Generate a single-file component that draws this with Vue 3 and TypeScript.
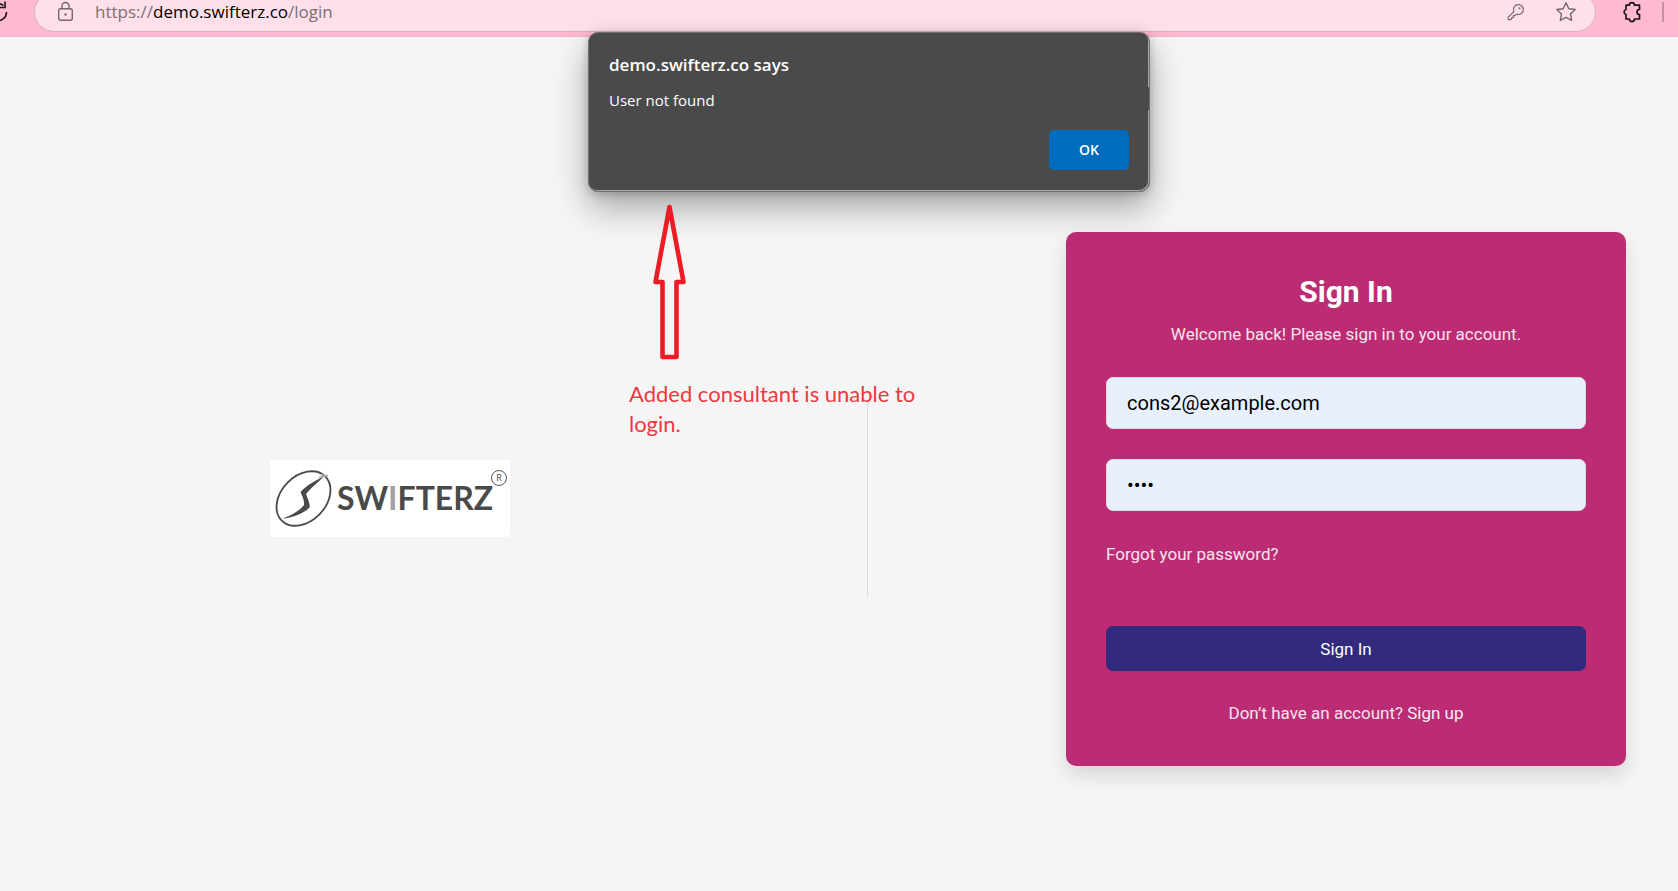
<script setup lang="ts">
import { ref } from 'vue'

const email = ref('cons2@example.com')
const password = ref('pass')
</script>

<template>
  <div class="window">
    <header class="toolbar">
      <button class="tool reload" type="button" aria-label="Refresh">
        <svg width="20" height="24" viewBox="0 0 20 24" fill="none" stroke="#1c1416" stroke-width="1.6">
          <path d="M18.500 12a8.500 8.500 0 1 1-3.200-6.500" />
          <path d="M17 1.500v6h-6" />
        </svg>
      </button>
      <div class="address">
        <svg width="18" height="22" viewBox="0 0 18 22" fill="none" stroke="#75676c" stroke-width="1.4">
          <rect x="1.7" y="7.7" width="13.6" height="11.6" rx="2" />
          <path d="M5 7.5V5a3.5 3.5 0 0 1 7 0v2.5" />
          <circle cx="8.5" cy="13.5" r="1.2" fill="#75676c" stroke="none" />
        </svg>
        <span class="url">https://<b>demo.swifterz.co</b>/login</span>
        <button class="tool" type="button" aria-label="Saved passwords">
          <svg width="18" height="18" viewBox="0 0 18 18" fill="none" stroke="#75676c" stroke-width="1.2" stroke-linejoin="round">
            <path d="M6.8 8.6A5 5 0 1 1 9.5 11.2L8 12.7H6.4v1.8H4.8v1.2L3.9 16.7H1.3v-2.6z" />
            <circle cx="12.6" cy="5.3" r="1" fill="#75676c" stroke="none" />
          </svg>
        </button>
        <button class="tool" type="button" aria-label="Add to favorites">
          <svg width="22" height="22" viewBox="0 0 22 22" fill="none" stroke="#75676c" stroke-width="1.4" stroke-linejoin="round">
            <path d="M11 1.8l2.8 5.9 6.4.8-4.7 4.5 1.2 6.4-5.7-3.1-5.7 3.1 1.2-6.4L1.8 8.5l6.4-.8z" />
          </svg>
        </button>
      </div>
      <button class="tool" type="button" aria-label="Extensions">
        <svg width="20" height="22" viewBox="0 0 20 22" fill="none" stroke="#1c1416" stroke-width="1.7" stroke-linejoin="round">
          <path d="M4 4.2h3.300a2.6 2.6 0 0 1 5.200 0H17.500v4.3a2.5 2.5 0 0 0 0 5V18H12.500a2.6 2.6 0 0 1-5.200 0H4v-4.500a2.6 2.6 0 0 1 0-5z" />
        </svg>
      </button>
      <span class="rule"></span>
    </header>

    <main class="page">
      <section class="brand">
        <svg class="logo" width="240" height="78" viewBox="0 0 240 78" role="img" aria-label="Swifterz">
          <rect width="240" height="77" rx="2" fill="#fff" />
          <ellipse cx="33.5" cy="38.5" rx="31" ry="22.5" transform="rotate(-46 33.5 38.5)" fill="none" stroke="#4a4a4a" stroke-width="1.8" />
          <path d="M53.5 17C45 20.5 37 25 30.5 32c2 4.500 4 8.500 3.500 13C30 51 21 55 12.500 58.800 22 57.500 33.500 54 39.500 47.500c1-4-2-9-3.500-13.500C41 28 47.500 22.500 53.500 17z" fill="#4a4a4a" />
          <path d="M51 14.5l5 1.5M49 17.5l9-2" stroke="#a5a5a5" stroke-width="1.6" />
          <text x="67" y="50" font-size="32" font-weight="700" fill="#4a4a4a">SW<tspan fill="#a0a0a0">I</tspan>FTERZ</text>
          <circle cx="229" cy="18" r="7.5" fill="none" stroke="#555" stroke-width="1" />
          <text x="229" y="21" font-size="9" text-anchor="middle" fill="#555">R</text>
        </svg>
      </section>
      <div class="divider"></div>
      <form class="card" @submit.prevent>
        <h1>Sign In</h1>
        <p class="welcome">Welcome back! Please sign in to your account.</p>
        <input v-model="email" type="email" aria-label="Email" />
        <input v-model="password" type="password" aria-label="Password" />
        <a class="forgot" href="#">Forgot your password?</a>
        <button class="submit" type="submit">Sign In</button>
        <p class="signup">Don’t have an account? <a href="#">Sign up</a></p>
      </form>
    </main>

    <div class="dialog" role="alertdialog" aria-labelledby="dialog-title" aria-describedby="dialog-text">
      <h2 id="dialog-title">demo.swifterz.co says</h2>
      <p id="dialog-text">User not found</p>
      <button type="button">OK</button>
    </div>

    <div class="note">
      <svg width="38" height="156" viewBox="0 0 38 156" fill="none" stroke="#ed1c24" stroke-width="4.6">
        <path d="M18.5 3 32.500 78H25.500V153H11.500V78H4.500z" stroke-linejoin="round" />
      </svg>
      <p>Added consultant is unable to login.</p>
    </div>
  </div>
</template>

<style>
body {
  margin: 0;
  background: #f5f5f5;
}
</style>

<style scoped>
.window {
  position: relative;
  box-sizing: border-box;
  min-height: 100vh;
  display: flex;
  flex-direction: column;
  overflow: hidden;
  background: #f5f5f5;
  font-family: Roboto, "Liberation Sans", sans-serif;
}

.window *,
.window *::before {
  box-sizing: border-box;
}

.toolbar {
  height: 37px;
  flex: none;
  display: flex;
  align-items: flex-end;
  gap: 26px;
  padding: 0 14px 4px 0;
  overflow: hidden;
  background: #ffb9d0;
  border-bottom: 1px solid #f3b4c8;
}

.tool {
  display: flex;
  padding: 0;
  border: 0;
  background: none;
}

.toolbar > .tool {
  margin-bottom: 9px;
}

.toolbar > .reload {
  margin: 0 0 8px -12px;
}

.address {
  flex: 1;
  height: 40px;
  display: flex;
  align-items: center;
  gap: 28px;
  padding: 0 18px 0 22px;
  border: 1px solid #d0b5bf;
  border-radius: 20px;
  background: #ffe0ea;
}

.address > .tool:first-of-type {
  margin-right: 2px;
}

.url {
  flex: 1;
  margin-left: -8px;
  color: #7c6f74;
  font: 17px/24px "Open Sans", "Noto Sans", sans-serif;
}

.url b {
  color: #000;
  font-weight: 400;
}

.rule {
  width: 2px;
  height: 20px;
  margin: 0 0 10px -6px;
  background: #c98fa3;
}

.page {
  flex: 1;
  display: flex;
  align-items: center;
  padding: 70px 52px 0 0;
}

.brand {
  flex: 1;
  display: flex;
  justify-content: center;
}

.logo {
  font-family: Lato, "Open Sans", sans-serif;
}

.divider {
  width: 1px;
  height: 196px;
  margin: 0 198px 0 87px;
  background: #dcdcdc;
}

.card {
  flex: 0 1 560px;
  display: flex;
  flex-direction: column;
  padding: 40px;
  border-radius: 10px;
  background: #bc2c74;
  box-shadow: 0 10px 20px rgba(0, 0, 0, 0.12);
  color: #f4e4ec;
  font-size: 17px;
  line-height: 26px;
}

.card h1 {
  margin: 0;
  color: #fff;
  font-size: 30px;
  line-height: 40px;
  text-align: center;
}

.card p {
  margin: 0;
  text-align: center;
}

.card .welcome {
  margin: 9px 0 30px;
}

.card input {
  width: 100%;
  height: 52px;
  margin-bottom: 30px;
  padding: 0 20px;
  border: 1px solid #dcdcdc;
  border-radius: 7px;
  outline: 0;
  background: #e8f0fe;
  color: #000;
  font: 20px Roboto, "Liberation Sans", sans-serif;
}

.card a {
  color: inherit;
  text-decoration: none;
}

.forgot {
  align-self: flex-start;
  margin-bottom: 59px;
}

.submit {
  height: 45px;
  margin-bottom: 29px;
  border: 0;
  border-radius: 7px;
  background: #322a7d;
  color: #fff;
  font: 17px Roboto, "Liberation Sans", sans-serif;
}

.card .signup a {
  color: #fbeef4;
}

.dialog {
  position: absolute;
  top: 32px;
  left: 588px;
  width: 562px;
  display: flex;
  flex-direction: column;
  padding: 20px 20px 21px;
  border: 1px solid #77706f;
  border-radius: 10px;
  background: #4a4a4a;
  box-shadow: inset -1px -1px 0 #a5a5a5, 0 16px 34px rgba(0, 0, 0, 0.32), 0 2px 10px rgba(0, 0, 0, 0.2);
  color: #fff;
  font-family: "Open Sans", "Noto Sans", sans-serif;
}

.dialog::before {
  content: "";
  position: absolute;
  top: 54px;
  right: 0;
  width: 1px;
  height: 23px;
  background: #4a4a4a;
}

.dialog h2 {
  margin: 0;
  font-size: 17px;
  font-weight: 600;
  line-height: 24px;
}

.dialog p {
  margin: 11px 0 18px;
  font-size: 15px;
  line-height: 24px;
}

.dialog button {
  align-self: flex-end;
  width: 80px;
  height: 40px;
  padding: 0 0 2px;
  border: 0;
  border-radius: 5px;
  background: #006cbe;
  color: #fff;
  font: 600 14px "Open Sans", "Noto Sans", sans-serif;
}

.note {
  position: absolute;
  top: 204px;
  left: 629px;
  width: 290px;
  color: #ee3840;
  font: 22px/30px Lato, "Open Sans", sans-serif;
}

.note svg {
  display: block;
  margin-left: 22px;
}

.note p {
  margin: 19px 0 0;
}
</style>
